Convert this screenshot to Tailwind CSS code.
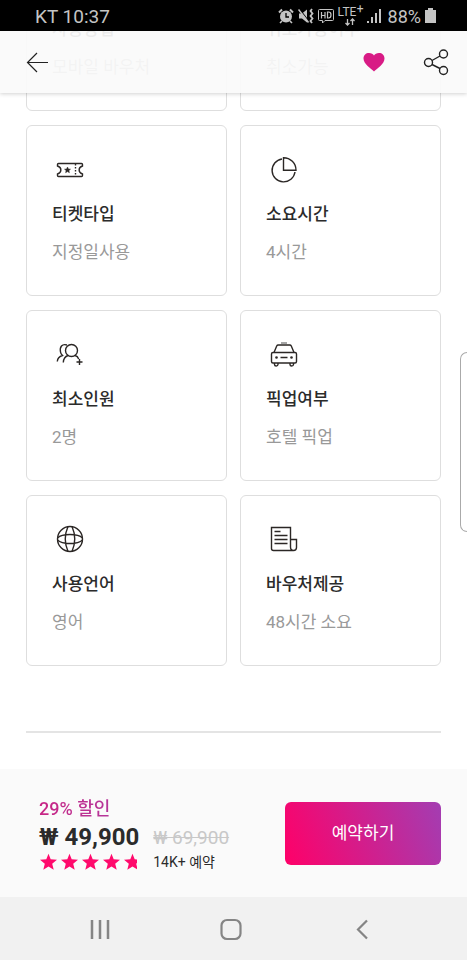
<!DOCTYPE html>
<html lang="ko">
<head>
<meta charset="utf-8">
<meta name="viewport" content="width=device-width, initial-scale=1">
<title>상품 정보</title>
<script src="https://cdn.jsdelivr.net/npm/@tailwindcss/browser@4"></script>
</head>
<body class="flex h-screen flex-col overflow-hidden bg-white font-['Roboto','Noto_Sans_CJK_KR',sans-serif] text-[17px] leading-6 text-[#2b2b2b]">

<!-- Status bar -->
<div class="flex h-[31px] shrink-0 items-center justify-between bg-black pr-[30px] pl-[35px] text-[19px] text-[#c4c4c4]">
  <span class="pt-[2px]">KT 10:37</span>
  <div class="flex items-center gap-1">
    <svg class="h-4 w-4" viewBox="0 0 16 16" fill="none" aria-label="알람">
      <path d="M1 4.5L4 1.5M15 4.5L12 1.5" stroke="#c4c4c4" stroke-width="2"/>
      <circle cx="8" cy="8.5" r="6" fill="#c4c4c4"/>
      <path d="M8 5v4h3" stroke="#000" stroke-width="1.3"/>
      <path d="M4 13l-2 2M12 13l2 2" stroke="#c4c4c4" stroke-width="1.6"/>
    </svg>
    <svg class="h-4 w-4" viewBox="0 0 16 16" fill="none" aria-label="진동">
      <path d="M1 5.500h3l5-4v13l-5-4H1z" fill="#c4c4c4"/>
      <path d="M1.500 1l10 13" stroke="#000" stroke-width="1.200"/>
      <path d="M.5 1.500l10 13" stroke="#c4c4c4" stroke-width="1.500"/>
      <path d="M14 1l-1.500 2 2 2.500-2 2.500 2 2.500-2 2.500 1.500 2" stroke="#c4c4c4" stroke-width="1.800"/>
    </svg>
    <svg class="h-4 w-4" viewBox="0 0 16 16" fill="none" stroke="#c4c4c4" aria-label="HD">
      <path d="M1.500 1.500h13q1 0 1 1v9q0 1-1 1H7l-2.500 2.500v-2.500h-3q-1 0-1-1v-9q0-1 1-1z"/>
      <path d="M3.500 4v6.500M7 4v6.500M3.500 7.500H7M9.500 4v6h1q2.500 0 2.500-3t-2.500-3z" stroke-width="1.200"/>
    </svg>
    <div class="relative flex h-5 w-[25px] flex-col items-center text-[12px] leading-3">
      <span class="w-full">LTE</span>
      <span class="absolute top-[-3px] right-[-1px]">+</span>
      <svg class="h-2 w-[10px]" viewBox="0 0 10 8" fill="none" stroke="#c4c4c4"><path d="M2.500 1v6M.5 5l2 2 2-2M7.500 7V1M5.500 3l2-2 2 2" stroke-width="1.300"/></svg>
    </div>
    <svg class="h-4 w-[15px]" viewBox="0 0 15 16" fill="#c4c4c4" aria-label="신호"><path d="M0 13h2v2H0zM4 9h2v6H4zM8 5h2v10H8zM12 1h2v14h-2z"/></svg>
    <span class="pt-[2px] pl-[2px] text-[18px]">88%</span>
    <svg class="h-4 w-3" viewBox="0 0 12 16" fill="#c4c4c4" aria-label="배터리"><path d="M3 0h5v2h3v13H0V2h3z"/></svg>
  </div>
</div>

<div class="relative min-h-0 flex-1">
  <!-- App bar floating over the scrolled content -->
  <header class="absolute inset-x-0 top-0 z-10 flex h-[62px] items-center justify-between bg-[#fafafa]/93 pr-[18px] pl-[26px] shadow-[0_1px_4px_rgba(0,0,0,0.18)]">
    <button type="button" aria-label="뒤로">
      <svg class="h-6 w-6" viewBox="0 0 24 24" fill="none" stroke="#222" stroke-width="1.200"><path d="M22 12.500H1.500M11 3L1.500 12.500 11 22"/></svg>
    </button>
    <div class="flex items-center gap-[37px]">
      <button type="button" aria-label="찜하기">
        <svg class="h-6 w-6" viewBox="0 0 24 24" fill="#d81b85"><path d="M12 21.500C9 18.500 1.500 14 1.500 8.500 1.500 5 4 3 7 3 9.300 3 11.200 4 12 5.500 12.800 4 14.700 3 17 3 20 3 22.500 5 22.500 8.500 22.500 14 15 18.500 12 21.500z"/></svg>
      </button>
      <button type="button" aria-label="공유">
        <svg class="h-[28px] w-[26px]" viewBox="0 0 26 28" fill="none" stroke="#222" stroke-width="1.400"><circle cx="5.500" cy="14.500" r="4"/><circle cx="20.500" cy="6" r="4"/><circle cx="20.500" cy="22.500" r="4"/><path d="M9 12.500L17 8M9 16.500L17 20.500"/></svg>
      </button>
    </div>
  </header>

  <main class="h-full overflow-hidden px-[26px]">
    <section class="-mt-[91px] grid grid-cols-2 gap-x-[13px] gap-y-[14px]">
      <article class="rounded-md border border-[#dedede] px-[25px] pt-[26px] pb-[31px]">
        <div class="h-9"></div>
        <h2 class="mt-[14px] font-medium">사용방법</h2>
        <p class="mt-[14px] text-[#999]">모바일 바우처</p>
      </article>
      <article class="rounded-md border border-[#dedede] px-[25px] pt-[26px] pb-[31px]">
        <div class="h-9"></div>
        <h2 class="mt-[14px] font-medium">취소가능여부</h2>
        <p class="mt-[14px] text-[#999]">취소가능</p>
      </article>

      <article class="rounded-md border border-[#dedede] px-[25px] pt-[26px] pb-[31px]">
        <svg class="h-9 w-9" viewBox="0 0 36 36" fill="none" stroke="#2b2725" stroke-width="1.400">
          <path d="M6.500 11.500H29.500Q30.500 11.500 30.500 12.500V14C26 15.500 26 20.500 30.500 22V23.500Q30.500 24.500 29.500 24.500H6.500Q5.500 24.500 5.500 23.500V22C10 20.500 10 15.500 5.500 14V12.500Q5.500 11.500 6.500 11.500z"/>
          <path d="M23.500 12v12" stroke-dasharray="1.500 1.500"/>
          <path d="M15.500 15l.9 2 2.100.2-1.600 1.400.5 2.100-1.900-1.100-1.900 1.100.5-2.100-1.600-1.400 2.100-.2z" fill="#2b2725" stroke-width=".5"/>
        </svg>
        <h2 class="mt-[14px] font-medium">티켓타입</h2>
        <p class="mt-[14px] text-[#999]">지정일사용</p>
      </article>
      <article class="rounded-md border border-[#dedede] px-[25px] pt-[26px] pb-[31px]">
        <svg class="h-9 w-9" viewBox="0 0 36 36" fill="none" stroke="#2b2725" stroke-width="1.400">
          <path d="M16 7A11.500 11.500 0 1 0 29 20"/>
          <path d="M17.500 18.200V5.700A12.500 12.500 0 0 1 30 18.200z"/>
        </svg>
        <h2 class="mt-[14px] font-medium">소요시간</h2>
        <p class="mt-[14px] text-[#999]">4시간</p>
      </article>

      <article class="rounded-md border border-[#dedede] px-[25px] pt-[26px] pb-[31px]">
        <svg class="h-9 w-9" viewBox="0 0 36 36" fill="none" stroke="#2b2725" stroke-width="1.400">
          <circle cx="19.500" cy="13.500" r="6"/>
          <path d="M16 18.500C13 19.500 11.500 22 11.300 25.500M23 18.500C25 19 26 20 26.700 22M15 8C10 6.500 7.500 10 8.500 15 8.700 16.500 9.500 17.500 10.500 18.500 7 19.500 5.500 21.500 5.300 24.500"/>
          <path d="M27.500 22v6M24.500 25h6"/>
        </svg>
        <h2 class="mt-[14px] font-medium">최소인원</h2>
        <p class="mt-[14px] text-[#999]">2명</p>
      </article>
      <article class="rounded-md border border-[#dedede] px-[25px] pt-[26px] pb-[31px]">
        <svg class="h-9 w-9" viewBox="0 0 36 36" fill="none" stroke="#2b2725" stroke-width="1.400">
          <path d="M8 15.500L10.700 9q.5-1 1.500-1h11.600q1 0 1.500 1L28 15.500"/>
          <rect x="5.500" y="15.500" width="25" height="10.500" rx="1.500"/>
          <path d="M8.500 26v1.500q0 1.500 1.700 1.500t1.800-1.500V26M24 26v1.500q0 1.500 1.700 1.500t1.800-1.500V26M14.500 20.500h7"/>
          <path d="M15 6h6" stroke="#888" stroke-width="1.500"/>
          <circle cx="10.500" cy="20.500" r="1.300" fill="#2b2725" stroke="none"/><circle cx="25.500" cy="20.500" r="1.300" fill="#2b2725" stroke="none"/>
        </svg>
        <h2 class="mt-[14px] font-medium">픽업여부</h2>
        <p class="mt-[14px] text-[#999]">호텔 픽업</p>
      </article>

      <article class="rounded-md border border-[#dedede] px-[25px] pt-[26px] pb-[31px]">
        <svg class="h-9 w-9" viewBox="0 0 36 36" fill="none" stroke="#2b2725" stroke-width="1.400">
          <circle cx="18" cy="17" r="12.500"/>
          <path d="M16 4.500Q10.500 17 16 29.500M20 4.500Q25.500 17 20 29.500M5.500 16Q9 12.500 18 12.500T30.500 16M5.500 18Q9 21.500 18 21.500T30.500 18"/>
        </svg>
        <h2 class="mt-[14px] font-medium">사용언어</h2>
        <p class="mt-[14px] text-[#999]">영어</p>
      </article>
      <article class="rounded-md border border-[#dedede] px-[25px] pt-[26px] pb-[31px]">
        <svg class="h-9 w-9" viewBox="0 0 36 36" fill="none" stroke="#2b2725" stroke-width="1.400">
          <path d="M24.500 17.500V5.500h-19V26.500q0 2 2 2H27.500q3 0 3-3V17.500H24.500V25q0 3.500 3 3.500"/>
          <path d="M8.500 9.500h6M8.500 13.500h13M8.500 17.500h13M8.500 21.500h13"/>
        </svg>
        <h2 class="mt-[14px] font-medium">바우처제공</h2>
        <p class="mt-[14px] text-[#999]">48시간 소요</p>
      </article>
    </section>
    <hr class="mt-[65px] border-t-2 border-[#e4e4e4]">
  </main>

  <!-- Edge panel handle -->
  <div class="absolute top-[321px] right-0 h-[180px] w-[7px] rounded-l-[7px] border border-r-0 border-[#aaa] bg-white"></div>
</div>

<!-- Booking bar -->
<footer class="flex h-32 shrink-0 items-center justify-between bg-[#fafafa] pr-[26px] pl-[39px]">
  <div class="grid grid-cols-[auto_auto] items-center gap-x-[14px] pt-[2px]">
    <p class="col-span-2 justify-self-start bg-linear-to-r from-[#c82585] to-[#b5359a] bg-clip-text text-[18px] leading-[26px] font-medium text-transparent">29% 할인</p>
    <strong class="text-[24px] leading-[30px] font-bold">₩ 49,900</strong>
    <del class="pt-[2px] text-[19px] leading-[28px] text-[#c8c8c8]">₩ 69,900</del>
    <svg class="h-5 w-[100px]" viewBox="0 0 100 20" fill="#ff0a6c" role="img" aria-label="별점 4.8">
      <defs><path id="star" d="M9.500.8l2.200 5.500 6.300.4-4.800 4 1.500 6.100-5.200-3.300-5.200 3.300 1.500-6.100-4.800-4 6.300-.4z"/><clipPath id="part"><path d="M0 0h98v20H0z"/></clipPath></defs>
      <use href="#star" y="1"/><use href="#star" x="21" y="1"/><use href="#star" x="42" y="1"/><use href="#star" x="63" y="1"/><g clip-path="url(#part)"><use href="#star" x="84" y="1"/></g>
    </svg>
    <span class="text-[14px] leading-5">14K+ 예약</span>
  </div>
  <button type="button" class="h-[63px] w-[156px] rounded-md bg-linear-70/srgb from-[#ff0068] to-[#a33db2] text-white">예약하기</button>
</footer>

<!-- System navigation -->
<nav class="flex h-[63px] shrink-0 items-center justify-center gap-[107px] bg-[#f1f1f1] pr-[6px]">
  <button type="button" aria-label="최근 앱"><svg class="h-6 w-6" viewBox="0 0 24 24" stroke="#858585" stroke-width="2.500"><path d="M4 3v19M12 3v19M20 3v19"/></svg></button>
  <button type="button" aria-label="홈"><svg class="h-6 w-6" viewBox="0 0 24 24" fill="none" stroke="#858585" stroke-width="2.200"><rect x="2.500" y="3" width="19" height="19" rx="5.500"/></svg></button>
  <button type="button" aria-label="이전"><svg class="h-6 w-6" viewBox="0 0 24 24" fill="none" stroke="#858585" stroke-width="2.200"><path d="M17 3.500L8 12.500 17 21.500"/></svg></button>
</nav>
</body>
</html>
